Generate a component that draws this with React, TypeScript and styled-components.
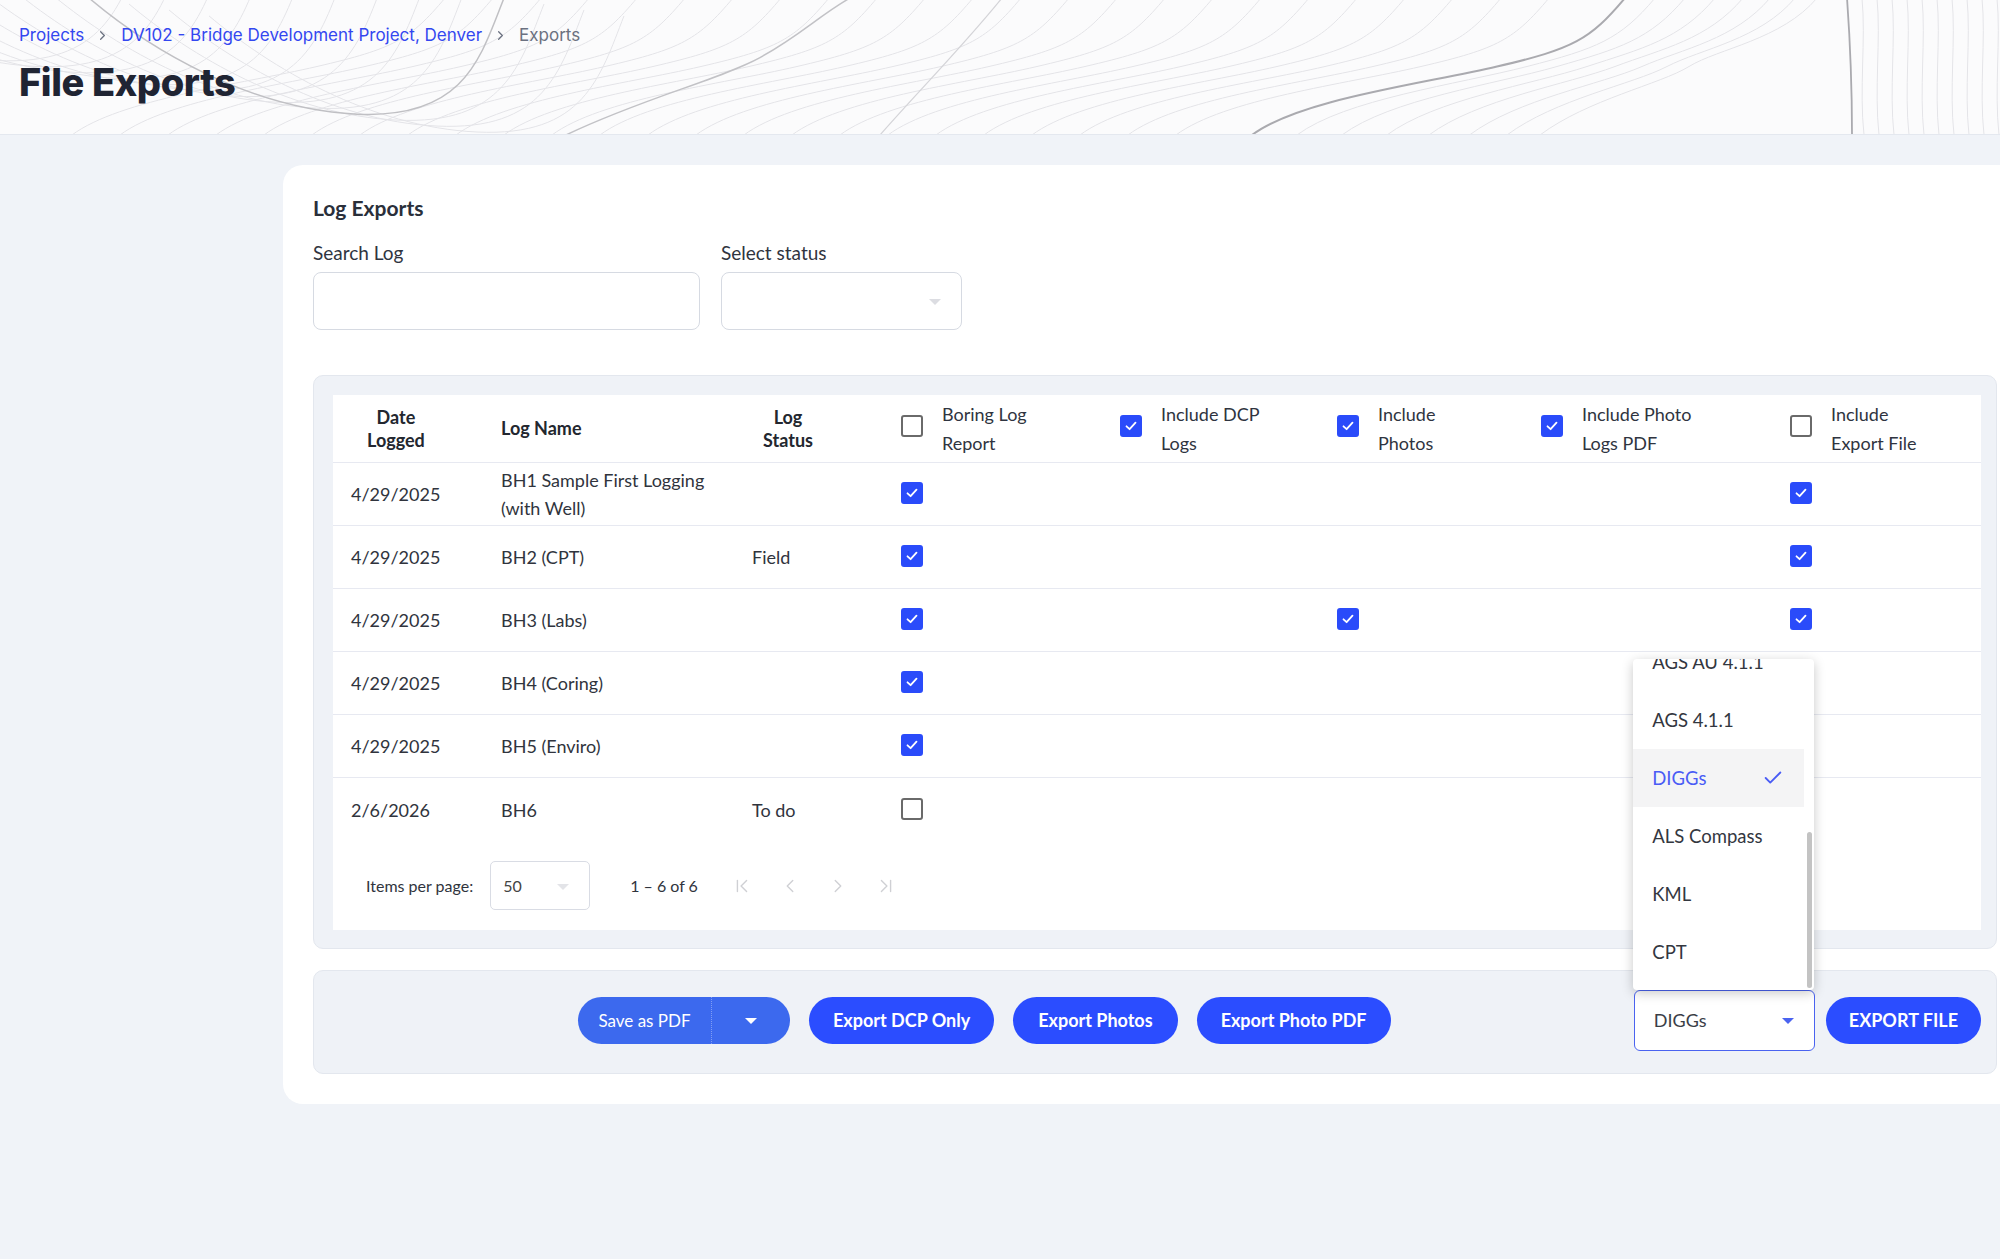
import React from 'react';
import styled, { createGlobalStyle } from 'styled-components';
import { ChevronFirst, ChevronLast, ChevronLeft, ChevronRight, Check } from 'lucide-react';

const GlobalStyle = createGlobalStyle`
  * { box-sizing: border-box; }
  body {
    margin: 0;
    background: #f0f3f8;
    font-family: Lato, "Noto Sans", sans-serif;
    color: #2c313b;
    overflow-x: hidden;
  }
`;

const COLS = '150px 251px 149px 219px 217px 204px 249px 1fr';

const Header = styled.header`
  position: relative;
  height: 135px;
  padding: 24px 19px 0;
  background: #fbfbfc;
  border-bottom: 1px solid #e4e8ef;
  overflow: hidden;
`;

const Topo = styled.svg`
  position: absolute;
  inset: 0;
  width: 100%;
  height: 100%;
`;

const Crumbs = styled.nav`
  position: relative;
  display: flex;
  align-items: center;
  gap: 11px;
  font-family: Inter, sans-serif;
  font-size: 17px;
  line-height: 22px;
`;

const CrumbLink = styled.a`
  color: #3347f0;
  text-decoration: none;
`;

const CrumbCurrent = styled.span`
  color: #6b7180;
`;

const Title = styled.h1`
  position: relative;
  margin: 13px 0 0;
  font-family: Inter, sans-serif;
  font-size: 38px;
  line-height: 46px;
  font-weight: 800;
  letter-spacing: -0.4px;
  color: #1f2433;
`;

const Main = styled.main`
  padding: 30px 0 154px 283px;
`;

const Card = styled.section`
  width: 1744px;
  background: #fff;
  border-radius: 20px;
  padding: 31px 30px 30px;
`;

const CardTitle = styled.h2`
  margin: 0;
  font-size: 21px;
  line-height: 24px;
  font-weight: 700;
  color: #2a2f3a;
`;

const Filters = styled.div`
  display: flex;
  gap: 21px;
  margin-top: 23px;
`;

const Field = styled.label`
  display: flex;
  flex-direction: column;
  gap: 9px;
  font-size: 19px;
  line-height: 20px;
  color: #2f3440;
`;

const Input = styled.div<{ $w: number }>`
  position: relative;
  width: ${(p) => p.$w}px;
  height: 58px;
  border: 1px solid #d6dae2;
  border-radius: 8px;
  background: #fff;
`;

const Caret = styled.span<{ $color?: string; $right?: number }>`
  position: absolute;
  top: 50%;
  right: ${(p) => p.$right ?? 20}px;
  width: 0;
  height: 0;
  margin-top: -2px;
  border-left: 6px solid transparent;
  border-right: 6px solid transparent;
  border-top: 6px solid ${(p) => p.$color ?? '#dcdde2'};
`;

const Panel = styled.div`
  background: #eff2f7;
  border: 1px solid #e3e7ee;
  border-radius: 10px;
`;

const TablePanel = styled(Panel)`
  margin-top: 45px;
  padding: 19px 15px 18px 19px;
`;

const Table = styled.div`
  background: #fff;
`;

const Row = styled.div<{ $head?: boolean; $last?: boolean }>`
  display: grid;
  grid-template-columns: ${COLS};
  align-items: center;
  height: ${(p) => (p.$head ? 68 : 63)}px;
  border-bottom: ${(p) => (p.$last ? 'none' : '1px solid #e7e9f1')};
  font-size: 18px;
  color: #30343d;
`;

const Cell = styled.div`
  padding-left: 18px;
  line-height: 28px;
`;

const HeadCell = styled(Cell)<{ $pad?: number }>`
  padding-left: ${(p) => p.$pad ?? 18}px;
  font-weight: 700;
  color: #23272f;
  line-height: 23px;
`;

const Centered = styled.span`
  display: inline-block;
  text-align: center;
`;

const CheckHead = styled(Cell)`
  display: flex;
  align-items: center;
  gap: 19px;
  line-height: 29px;
  color: #2f3440;
`;

const Box = styled.span<{ $checked?: boolean }>`
  display: inline-flex;
  align-items: center;
  justify-content: center;
  flex: none;
  width: 22px;
  height: 22px;
  border-radius: 3px;
  margin-top: -6px;
  background: ${(p) => (p.$checked ? '#2a4bfa' : '#fff')};
  border: 2px solid ${(p) => (p.$checked ? '#2a4bfa' : '#6a6a6a')};
  vertical-align: middle;
`;

const Pager = styled.div`
  display: flex;
  align-items: center;
  height: 89px;
  padding-left: 33px;
  font-size: 16px;
  color: #30343d;
`;

const PageSelect = styled.div`
  position: relative;
  width: 100px;
  height: 49px;
  margin-left: 17px;
  padding-left: 12px;
  display: flex;
  align-items: center;
  border: 1px solid #d9dce4;
  border-radius: 5px;
  font-size: 16px;
  color: #444;
`;

const Range = styled.span`
  margin-left: 40px;
  margin-right: 20px;
`;

const PageBtn = styled.span`
  width: 48px;
  display: flex;
  justify-content: center;
  color: #cfd0d4;
`;

const ActionPanel = styled(Panel)`
  margin-top: 21px;
  height: 104px;
  display: flex;
  align-items: center;
  padding: 0 15px 4px 264px;
`;

const Buttons = styled.div`
  display: flex;
  align-items: center;
  gap: 19px;
`;

const Pill = styled.button<{ $pad?: number }>`
  height: 47px;
  padding: 0 ${(p) => p.$pad ?? 24}px;
  border: none;
  border-radius: 24px;
  background: #2b4dff;
  color: #fff;
  font-family: Lato, sans-serif;
  font-size: 18px;
  font-weight: 700;
  white-space: nowrap;
`;

const Split = styled.div`
  display: flex;
  height: 47px;
  border-radius: 24px;
  overflow: hidden;
  background: #3c69ee;
  color: #fff;
`;

const SplitMain = styled.span`
  width: 134px;
  display: flex;
  align-items: center;
  justify-content: center;
  font-size: 17px;
  border-right: 1px dotted rgba(255, 255, 255, 0.35);
`;

const SplitArrow = styled.span`
  position: relative;
  width: 78px;
`;

const RightGroup = styled.div`
  margin-left: auto;
  display: flex;
  align-items: center;
  gap: 11px;
`;

const FormatSelect = styled.div`
  position: relative;
  width: 181px;
  height: 61px;
  padding-left: 19px;
  display: flex;
  align-items: center;
  border: 1.5px solid #4a63f0;
  border-radius: 6px;
  background: #fff;
  font-size: 18px;
  color: #3a3e47;
`;

const Menu = styled.div`
  position: absolute;
  left: -1.5px;
  bottom: calc(100% + 1px);
  width: 181px;
  height: 331px;
  overflow: hidden;
  background: #fff;
  border-radius: 4px;
  box-shadow: 0 3px 12px rgba(0, 0, 0, 0.22);
`;

const MenuList = styled.ul`
  list-style: none;
  margin: -26px 10px 0 0;
  padding: 0;
`;

const MenuItem = styled.li<{ $selected?: boolean }>`
  height: 58px;
  padding: 0 20px 0 19px;
  display: flex;
  align-items: center;
  justify-content: space-between;
  font-size: 18.5px;
  color: ${(p) => (p.$selected ? '#4a5cf5' : '#33373f')};
  background: ${(p) => (p.$selected ? '#f4f4f5' : 'transparent')};
`;

const Thumb = styled.span`
  position: absolute;
  right: 2px;
  top: 173px;
  width: 5px;
  height: 156px;
  border-radius: 3px;
  background: #c3c3c3;
`;

const TinyCheck = () => (
  <svg width="14" height="14" viewBox="0 0 14 14">
    <path d="M2.5 7.3 L5.6 10.2 L11.5 3.6" fill="none" stroke="#fff" strokeWidth="1.8" strokeLinecap="round" strokeLinejoin="round" />
  </svg>
);

const CheckBox = ({ checked }: { checked?: boolean }) => <Box $checked={checked}>{checked && <TinyCheck />}</Box>;

const curveC = (dx: number, steep = 1) =>
  `M ${1252 + dx * steep} 136 C ${1300 + dx * steep} 100, ${1420 + dx * (steep + 1) / 2} 85, ${1497 + dx} 67 S ${1590 + dx} 40, ${1625 + dx} -2`;
const curveB = (dx: number, dy: number) =>
  `M ${89 + dx} ${-2 + dy} C ${150 + dx} ${50 + dy}, ${250 + dx} ${110 + dy}, ${357 + dx} ${115 + dy} S ${480 + dx} ${60 + dy}, ${504 + dx} ${-2 + dy}`;

const TopoLines = () => {
  const light = '#e4e4e8';
  const left = [-360, -320, -280, -240, -200, -160, -120, -80, -40, 40, 80, 120];
  const right: number[] = [];
  for (let dx = -1180; dx <= -40; dx += 48) right.push(dx);
  const steep = [30, 60, 90, 118, 145, 170, 192];
  const vertical: number[] = [];
  for (let x = 1862; x < 2000; x += 15) vertical.push(x);
  return (
    <Topo viewBox="0 0 2000 135" preserveAspectRatio="none">
      {left.map((d) => (
        <path key={`b${d}`} d={curveB(d, d * 0.15)} fill="none" stroke={light} strokeWidth="1" />
      ))}
      {right.map((d) => (
        <path key={`c${d}`} d={curveC(d)} fill="none" stroke={light} strokeWidth="1" />
      ))}
      {steep.map((d) => (
        <path key={`s${d}`} d={curveC(d, 1.5)} fill="none" stroke={light} strokeWidth="1" />
      ))}
      {vertical.map((x) => (
        <path key={`v${x}`} d={`M ${x} -2 C ${x + 4} 40, ${x - 3} 90, ${x + 2} 136`} fill="none" stroke={light} strokeWidth="1" />
      ))}
      <path d={curveB(0, 0)} fill="none" stroke="#c0c0c4" strokeWidth="1.5" />
      <path d="M 566 136 C 640 100, 720 80, 760 58 S 820 15, 850 -2" fill="none" stroke="#c2c2c6" strokeWidth="1.5" />
      <path d="M 880 136 C 920 90, 960 50, 1002 -2" fill="none" stroke="#d4d4d8" strokeWidth="1.2" />
      <path d={curveC(0)} fill="none" stroke="#aaaaaf" strokeWidth="2" />
      <path d="M 1847 -2 C 1850 40, 1852 90, 1852 136" fill="none" stroke="#aaaaaf" strokeWidth="1.8" />
    </Topo>
  );
};

const rows = [
  { date: '4/29/2025', name: ['BH1 Sample First Logging', '(with Well)'], status: '', boring: true, photos: false, exp: true },
  { date: '4/29/2025', name: ['BH2 (CPT)'], status: 'Field', boring: true, photos: false, exp: true },
  { date: '4/29/2025', name: ['BH3 (Labs)'], status: '', boring: true, photos: true, exp: true },
  { date: '4/29/2025', name: ['BH4 (Coring)'], status: '', boring: true, photos: false, exp: false },
  { date: '4/29/2025', name: ['BH5 (Enviro)'], status: '', boring: true, photos: false, exp: false },
  { date: '2/6/2026', name: ['BH6'], status: 'To do', boring: false, photos: false, exp: false },
];

const checkHeads: { label: [string, string]; checked: boolean }[] = [
  { label: ['Boring Log', 'Report'], checked: false },
  { label: ['Include DCP', 'Logs'], checked: true },
  { label: ['Include', 'Photos'], checked: true },
  { label: ['Include Photo', 'Logs PDF'], checked: true },
  { label: ['Include', 'Export File'], checked: false },
];

const formats = ['AGS AU 4.1.1', 'AGS 4.1.1', 'DIGGs', 'ALS Compass', 'KML', 'CPT'];

export default function App() {
  return (
    <>
      <GlobalStyle />
      <Header>
        <TopoLines />
        <Crumbs>
          <CrumbLink>Projects</CrumbLink>
          <ChevronRight size={15} color="#6b7180" />
          <CrumbLink>DV102 - Bridge Development Project, Denver</CrumbLink>
          <ChevronRight size={15} color="#6b7180" />
          <CrumbCurrent>Exports</CrumbCurrent>
        </Crumbs>
        <Title>File Exports</Title>
      </Header>
      <Main>
        <Card>
          <CardTitle>Log Exports</CardTitle>
          <Filters>
            <Field>
              Search Log
              <Input $w={387} />
            </Field>
            <Field>
              Select status
              <Input $w={241}>
                <Caret />
              </Input>
            </Field>
          </Filters>

          <TablePanel>
            <Table>
              <Row $head>
                <HeadCell $pad={34}>
                  <Centered>
                    Date
                    <br />
                    Logged
                  </Centered>
                </HeadCell>
                <HeadCell>Log Name</HeadCell>
                <HeadCell $pad={29}>
                  <Centered>
                    Log
                    <br />
                    Status
                  </Centered>
                </HeadCell>
                {checkHeads.map((h) => (
                  <CheckHead key={h.label.join()}>
                    <CheckBox checked={h.checked} />
                    <span>
                      {h.label[0]}
                      <br />
                      {h.label[1]}
                    </span>
                  </CheckHead>
                ))}
              </Row>
              {rows.map((r, i) => (
                <Row key={r.name[0]} $last={i === rows.length - 1}>
                  <Cell>{r.date}</Cell>
                  <Cell>
                    {r.name.map((n, j) => (
                      <React.Fragment key={n}>
                        {j > 0 && <br />}
                        {n}
                      </React.Fragment>
                    ))}
                  </Cell>
                  <Cell>{r.status}</Cell>
                  <Cell>
                    <CheckBox checked={r.boring} />
                  </Cell>
                  <Cell />
                  <Cell>{r.photos && <CheckBox checked />}</Cell>
                  <Cell />
                  <Cell>{r.exp && <CheckBox checked />}</Cell>
                </Row>
              ))}
              <Pager>
                Items per page:
                <PageSelect>
                  50
                  <Caret $color="#e3e4e8" />
                </PageSelect>
                <Range>1 – 6 of 6</Range>
                <PageBtn>
                  <ChevronFirst size={22} strokeWidth={1.5} />
                </PageBtn>
                <PageBtn>
                  <ChevronLeft size={22} strokeWidth={1.5} />
                </PageBtn>
                <PageBtn>
                  <ChevronRight size={22} strokeWidth={1.5} />
                </PageBtn>
                <PageBtn>
                  <ChevronLast size={22} strokeWidth={1.5} />
                </PageBtn>
              </Pager>
            </Table>
          </TablePanel>

          <ActionPanel>
            <Buttons>
              <Split>
                <SplitMain>Save as PDF</SplitMain>
                <SplitArrow>
                  <Caret $color="#fff" $right={33} />
                </SplitArrow>
              </Split>
              <Pill>Export DCP Only</Pill>
              <Pill $pad={25}>Export Photos</Pill>
              <Pill $pad={24}>Export Photo PDF</Pill>
            </Buttons>
            <RightGroup>
              <FormatSelect>
                DIGGs
                <Caret $color="#4a63f0" />
                <Menu>
                  <MenuList>
                    {formats.map((f) => (
                      <MenuItem key={f} $selected={f === 'DIGGs'}>
                        {f}
                        {f === 'DIGGs' && <Check size={22} strokeWidth={2} color="#4a5cf5" />}
                      </MenuItem>
                    ))}
                  </MenuList>
                  <Thumb />
                </Menu>
              </FormatSelect>
              <Pill $pad={23}>EXPORT FILE</Pill>
            </RightGroup>
          </ActionPanel>
        </Card>
      </Main>
    </>
  );
}
